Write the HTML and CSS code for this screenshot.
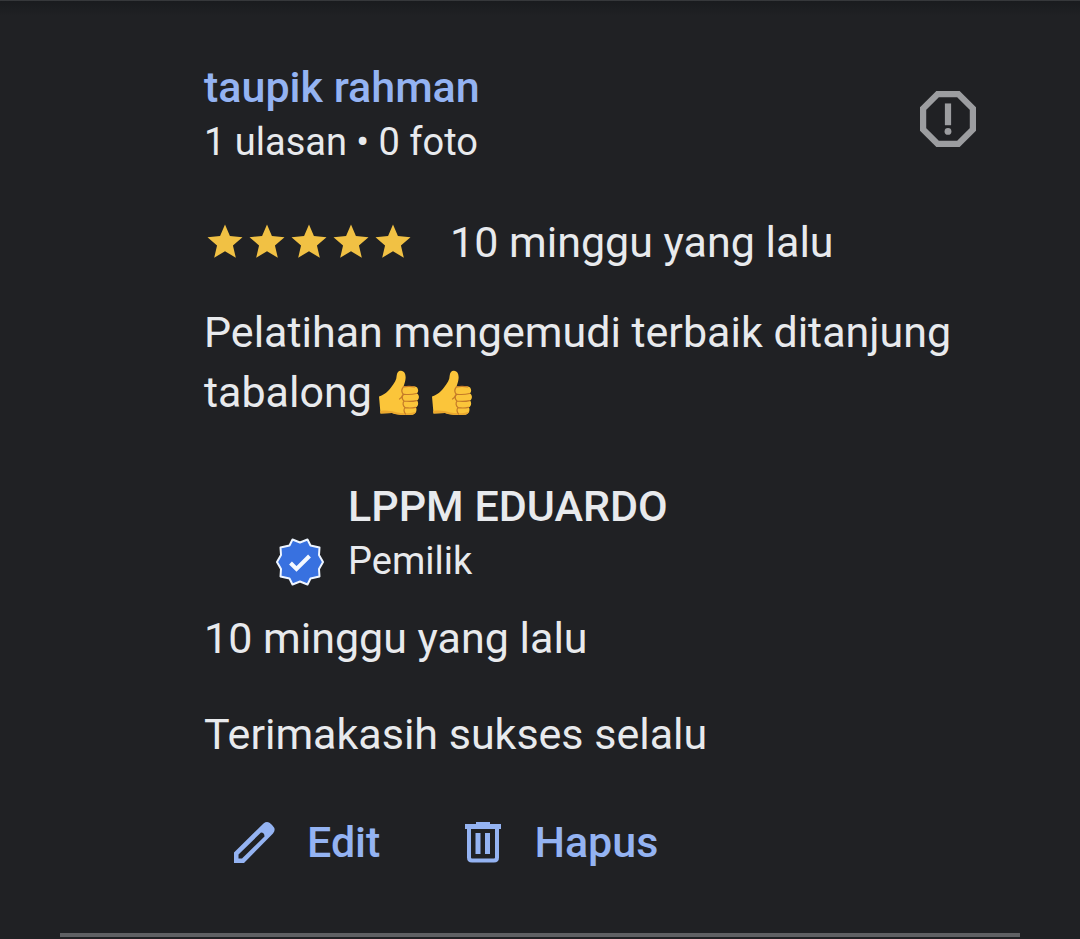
FILE: index.html
```html
<!DOCTYPE html>
<html lang="id">
<head>
  <meta charset="UTF-8" />
  <meta name="viewport" content="width=device-width, initial-scale=1" />
  <title>Ulasan</title>
  <link rel="stylesheet" href="styles.css">
</head>
<body>

  <!-- Icons used more than once -->
  <svg class="sprite" aria-hidden="true">
    <symbol id="star" viewBox="0 0 24 24">
      <path d="M12 17.27 18.18 21l-1.64-7.03L22 9.24l-7.19-.61L12 2 9.19 8.63 2 9.24l5.46 4.73L5.82 21z" />
    </symbol>
    <symbol id="thumb" viewBox="0 0 40 46">
      <path fill="#fbc53a" d="M0 26.500C6 24.500 9 21.500 12 17.500C15.500 13 17.500 10 17.700 5.500C18 1.800 20 .4 22 .7C25.500 1.200 26.800 4 26.600 8C26.400 11 25.500 13.500 24.600 16.300L35 16.300C39.500 16.500 40.200 21.500 37.800 23.300C40.800 25 40.400 29.300 38 30.500C40 32.600 39.200 36 37 37.200C38.500 40.500 36.500 44.500 32.500 44.800C25 45.500 18 44.800 13 43L1.500 43.500Z" />
      <path fill="#eba82f" d="M1.100 41C8 40 12 41 17 42.200C24 43.800 31 43.800 37.300 41.500C36.700 43.500 35 44.700 32.500 44.800C25 45.500 18 44.800 13 43L1.500 43.500Z" />
      <path fill="none" stroke="#c47a28" stroke-width="1.200" stroke-linecap="round" d="M24.500 16.700C22 20 23 23 24.500 24.500C22.500 26.500 23 29.500 25 31C23.500 33 23.800 36 26 37.500C24.500 39.500 25 42 26.500 44M24.500 17Q30 15.800 35.500 17M25 24.300Q32 25 37.500 23.500M25 31Q32 32 37.500 30.600M26 37.600Q32 38.500 36.500 37.300M24 24.500Q22.500 28 20.500 29" />
    </symbol>
  </svg>

  <main class="review">
    <header class="author">
      <div class="author-info">
        <a class="author-name" href="#">taupik rahman</a>
        <p class="small">1 ulasan • 0 foto</p>
      </div>
      <button class="report" type="button" aria-label="Laporkan ulasan">
        <svg viewBox="0 0 54 54">
          <path fill="none" stroke="currentColor" stroke-width="6" d="M17 3H37L51 17V37L37 51H17L3 37V17Z" />
          <path fill="currentColor" d="M24 12h6v21h-6z" />
          <circle cx="27" cy="39" r="3.300" fill="currentColor" />
        </svg>
      </button>
    </header>

    <div class="rating">
      <div class="stars" role="img" aria-label="5 bintang">
        <svg><use href="#star" /></svg>
        <svg><use href="#star" /></svg>
        <svg><use href="#star" /></svg>
        <svg><use href="#star" /></svg>
        <svg><use href="#star" /></svg>
      </div>
      <span>10 minggu yang lalu</span>
    </div>

    <p class="text">Pelatihan mengemudi terbaik ditanjung tabalong<svg class="thumb" role="img" aria-label="jempol"><use href="#thumb" /></svg><svg class="thumb" role="img" aria-label="jempol"><use href="#thumb" /></svg></p>

    <!-- Owner reply -->
    <section class="reply">
      <div class="owner">
        <svg class="badge" viewBox="0 0 48 48" role="img" aria-label="Terverifikasi">
          <path fill="#3871e0" stroke="#eef5ff" stroke-width="2" stroke-linejoin="round" d="M24 4.500L31.500 1.500L34.500 7.500L43.500 9.500L43 17L47 24L43 31L43.500 38.500L34.500 40.500L31.500 46.500L24 43.500L16.500 46.500L13.500 40.500L4.500 38.500L5 31L1 24L5 17L4.500 9.500L13.500 7.500L16.500 1.500Z" />
          <path fill="none" stroke="#f5f9ff" stroke-width="4" d="M14.500 25l6 6L33.500 18" />
        </svg>
        <div>
          <h2 class="owner-name">LPPM EDUARDO</h2>
          <p class="small">Pemilik</p>
        </div>
      </div>
      <p class="reply-date">10 minggu yang lalu</p>
      <p class="reply-text">Terimakasih sukses selalu</p>
    </section>

    <div class="actions">
      <button class="action" type="button">
        <svg viewBox="0 0 42 42">
          <path fill="currentColor" fill-rule="evenodd" d="M1 42V31.500L30.500 2.500Q34.500 -.5 38 3L39.500 4.500Q43.500 8.500 40 12.500L11 42ZM5.500 37.500H9L31.500 15.500Q31.500 11.500 28 11.500L5.500 33.500Z" />
        </svg>
        Edit
      </button>
      <button class="action" type="button">
        <svg viewBox="0 0 42 42">
          <path fill="currentColor" d="M16 1h14v2h11v5H5V3h11zM15.500 12h5v21h-5zM25 12h5v21h-5z" />
          <path fill="none" stroke="currentColor" stroke-width="4" d="M9 6V36.500Q9 39.500 12 39.500H34Q37 39.500 37 36.500V6" />
        </svg>
        Hapus
      </button>
    </div>
  </main>

</body>
</html>
```

FILE: styles.css
```css
* {
  box-sizing: border-box;
}

body {
  margin: 0;
  padding: 0 60px;
  background: #202124 linear-gradient(#191b1e, #202124) no-repeat 0 0 / 100% 16px;
  border-top: 1px solid #36383b;
  color: #e8eaed;
  font-family: Roboto, sans-serif;
  font-size: 43px;
  line-height: 60px;
}

h2,
p {
  margin: 0;
}

button {
  padding: 0;
  background: none;
  border: none;
  font: inherit;
  cursor: pointer;
}

svg {
  display: block;
}

.sprite {
  position: absolute;
  width: 0;
  height: 0;
}

.review {
  padding: 56px 44px 61px 144px;
  border-bottom: 4px solid #5f6063;
}

/* Author */
.author {
  display: flex;
  justify-content: space-between;
  align-items: flex-start;
}

.author-name {
  display: block;
  color: #94b3f2;
  font-weight: 500;
  text-decoration: none;
}

.small {
  font-size: 38px;
  line-height: 50px;
}

.report {
  margin-top: 34px;
  color: #9c9da0;
}

.report svg {
  width: 56px;
  height: 56px;
}

/* Rating */
.rating {
  display: flex;
  align-items: center;
  gap: 36px;
  margin-top: 45px;
}

.stars {
  display: flex;
  fill: #f1c144;
}

.stars svg {
  width: 42px;
  height: 42px;
}

.text {
  margin-top: 30px;
}

.thumb {
  display: inline-block;
  width: 40px;
  height: 46px;
  margin: 0 6px 0 7px;
  vertical-align: -9px;
}

/* Owner reply */
.reply {
  margin-top: 54px;
}

.owner {
  display: flex;
  align-items: flex-end;
  gap: 24px;
  padding-left: 72px;
}

.badge {
  width: 48px;
  height: 48px;
}

.owner-name {
  font-size: 43px;
  font-weight: 500;
}

.reply-date {
  margin-top: 22px;
}

.reply-text {
  margin-top: 36px;
}

/* Actions */
.actions {
  display: flex;
  gap: 80px;
  margin-top: 48px;
  padding-left: 29px;
}

.action {
  display: flex;
  align-items: center;
  gap: 32px;
  color: #94b3f2;
  font-weight: 500;
}

.action svg {
  width: 42px;
  height: 42px;
}
```
